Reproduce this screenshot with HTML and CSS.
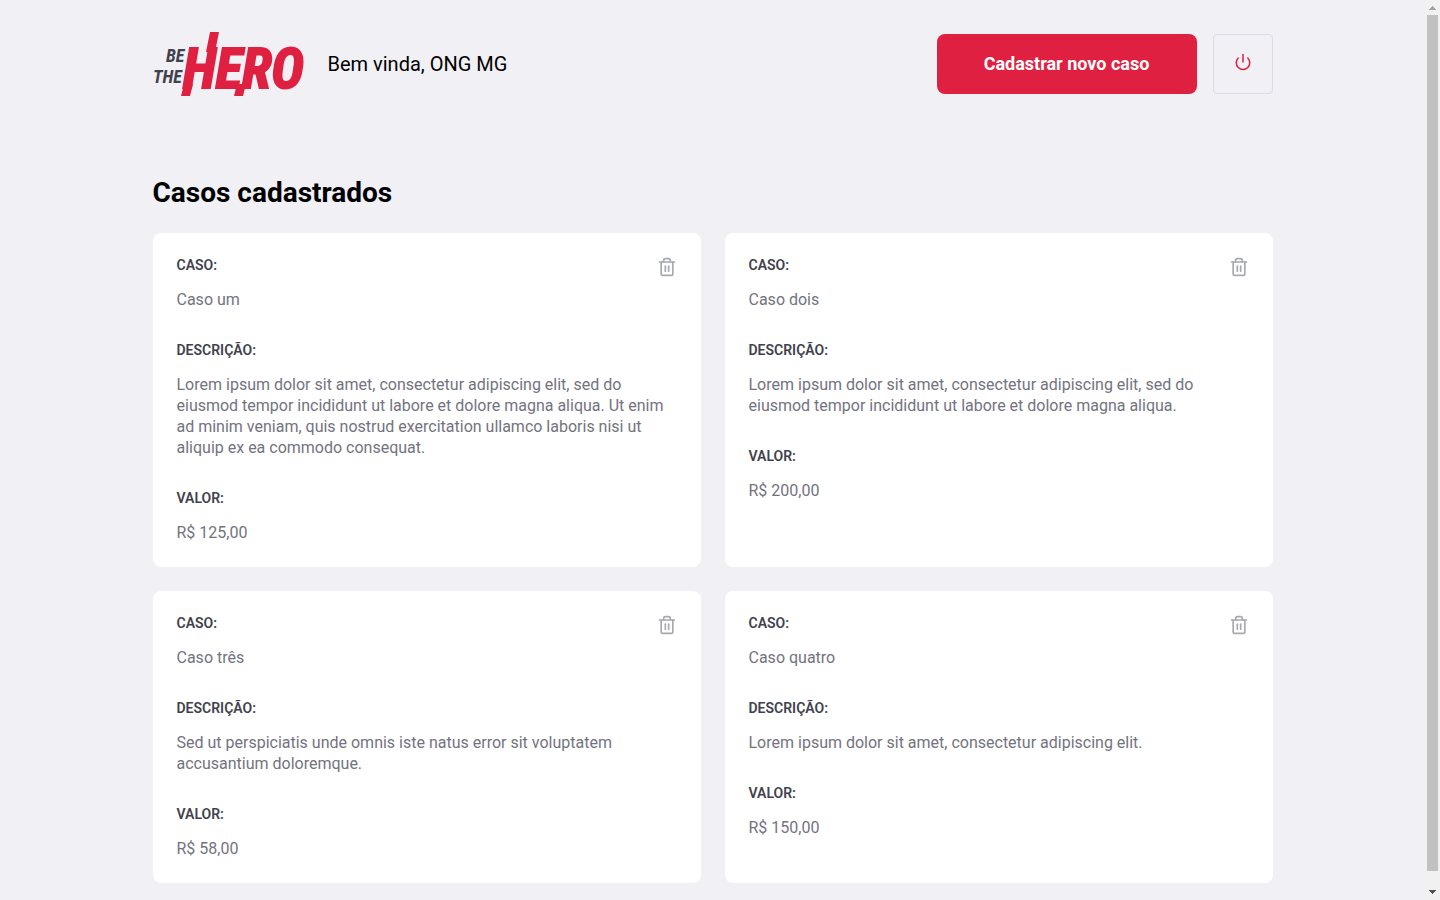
FILE: index.html
```html
<!DOCTYPE html>
<html lang="pt-BR">
<head>
<meta charset="utf-8">
<meta name="viewport" content="width=device-width, initial-scale=1">
<title>Be The Hero</title>
<link rel="stylesheet" href="styles.css">
</head>
<body>
<svg class="sprite" aria-hidden="true">
  <symbol id="trash" viewBox="0 0 24 24">
    <polyline points="3 6 5 6 21 6"/>
    <path d="M19 6v14a2 2 0 0 1-2 2H7a2 2 0 0 1-2-2V6m3 0V4a2 2 0 0 1 2-2h4a2 2 0 0 1 2 2v2"/>
    <line x1="10" y1="11" x2="10" y2="17"/>
    <line x1="14" y1="11" x2="14" y2="17"/>
  </symbol>
</svg>
<div class="profile">
  <header class="header">
    <svg class="logo" viewBox="0 0 150 64" role="img" aria-label="Be The Hero">
      <text class="logo-small" x="13" y="30">BE</text>
      <text class="logo-small" x="0" y="51">THE</text>
      <text class="logo-big" x="30" y="56">HERO</text>
      <path class="logo-bar" d="M31 52h9l-3 12h-9zM57 0h9l-4 20h-9zM84 52h9l-3 12h-9z"/>
    </svg>
    <span class="welcome">Bem vinda, ONG MG</span>
    <a class="button" href="#novo">Cadastrar novo caso</a>
    <button class="logout" type="button" aria-label="Sair">
      <svg class="power" viewBox="0 0 24 24"><path d="M18.36 6.64a9 9 0 1 1-12.73 0"/><line x1="12" y1="2" x2="12" y2="12"/></svg>
    </button>
  </header>
  <h1 class="title">Casos cadastrados</h1>
  <ul class="cases">
    <li class="case">
      <strong class="label">CASO:</strong>
      <p class="value">Caso um</p>
      <strong class="label">DESCRIÇÃO:</strong>
      <p class="value">Lorem ipsum dolor sit amet, consectetur adipiscing elit, sed do eiusmod tempor incididunt ut labore et dolore magna aliqua. Ut enim ad minim veniam, quis nostrud exercitation ullamco laboris nisi ut aliquip ex ea commodo consequat.</p>
      <strong class="label">VALOR:</strong>
      <p class="value">R$ 125,00</p>
      <button class="delete" type="button" aria-label="Excluir Caso um"><svg class="trash"><use href="#trash"/></svg></button>
    </li>
    <li class="case">
      <strong class="label">CASO:</strong>
      <p class="value">Caso dois</p>
      <strong class="label">DESCRIÇÃO:</strong>
      <p class="value">Lorem ipsum dolor sit amet, consectetur adipiscing elit, sed do eiusmod tempor incididunt ut labore et dolore magna aliqua.</p>
      <strong class="label">VALOR:</strong>
      <p class="value">R$ 200,00</p>
      <button class="delete" type="button" aria-label="Excluir Caso dois"><svg class="trash"><use href="#trash"/></svg></button>
    </li>
    <li class="case">
      <strong class="label">CASO:</strong>
      <p class="value">Caso três</p>
      <strong class="label">DESCRIÇÃO:</strong>
      <p class="value">Sed ut perspiciatis unde omnis iste natus error sit voluptatem accusantium doloremque.</p>
      <strong class="label">VALOR:</strong>
      <p class="value">R$ 58,00</p>
      <button class="delete" type="button" aria-label="Excluir Caso três"><svg class="trash"><use href="#trash"/></svg></button>
    </li>
    <li class="case">
      <strong class="label">CASO:</strong>
      <p class="value">Caso quatro</p>
      <strong class="label">DESCRIÇÃO:</strong>
      <p class="value">Lorem ipsum dolor sit amet, consectetur adipiscing elit.</p>
      <strong class="label">VALOR:</strong>
      <p class="value">R$ 150,00</p>
      <button class="delete" type="button" aria-label="Excluir Caso quatro"><svg class="trash"><use href="#trash"/></svg></button>
    </li>
  </ul>
</div>
<div class="scrollbar" aria-hidden="true">
  <svg class="arrow" viewBox="0 0 15 15"><path fill="#a3a3a3" d="M7 6h1v1h1v1h1v1h1v1H4V9h1V8h1V7h1z"/></svg>
  <div class="thumb"></div>
  <svg class="arrow" viewBox="0 0 15 15"><path fill="#505050" d="M4 5h7v1h-1v1H9v1H8v1H7V8H6V7H5V6H4z"/></svg>
</div>
</body>
</html>
```
FILE: styles.css
```css
* { margin: 0; padding: 0; box-sizing: border-box; }
html { scrollbar-width: none; }
body { padding-right: 15px; background: #f0f0f5; font: 400 16px/21px Roboto, sans-serif; -webkit-font-smoothing: antialiased; }
button { border: 0; background: transparent; cursor: pointer; }
.sprite { position: absolute; width: 0; height: 0; }
.profile { max-width: 1180px; padding: 32px 30px; margin: 0 auto; }
.header { display: flex; align-items: center; }
.logo { width: 150px; height: 64px; overflow: visible; }
.logo-small { font: italic 700 18px "Liberation Sans Narrow", "Roboto Condensed", "Liberation Sans", sans-serif; fill: #41414d; }
.logo-big { font: italic 700 55px "Liberation Sans Narrow", "Roboto Condensed", "Liberation Sans", sans-serif; fill: #e02041; stroke: #e02041; stroke-width: 2; }
.logo-bar { fill: #e02041; }
.welcome { font-size: 20px; line-height: 24px; margin-left: 25px; }
.button { width: 260px; height: 60px; margin-left: auto; border-radius: 8px; background: #e02041; color: #fff; font-size: 18px; font-weight: 700; line-height: 60px; text-align: center; text-decoration: none; }
.logout { display: flex; align-items: center; justify-content: center; width: 60px; height: 60px; margin-left: 16px; padding-bottom: 4px; border: 1px solid #dcdce6; border-radius: 4px; }
.power { width: 18px; height: 18px; fill: none; stroke: #e02041; stroke-width: 2; stroke-linecap: round; stroke-linejoin: round; }
.title { margin: 80px 0 24px; font-size: 28px; line-height: 33px; }
.cases { display: grid; grid-template-columns: repeat(2, 1fr); gap: 24px; list-style: none; }
.case { position: relative; padding: 24px; border-radius: 8px; background: #fff; }
.label { display: block; color: #41414d; font-size: 14px; font-weight: 600; line-height: 16px; }
.value { margin-top: 16px; color: #737380; }
.value + .label { margin-top: 32px; }
.delete { position: absolute; top: 24px; right: 24px; display: flex; }
.trash { width: 20px; height: 20px; fill: none; stroke: #a8a8b3; stroke-width: 2; stroke-linecap: round; stroke-linejoin: round; }
.scrollbar { position: fixed; top: 0; right: 0; bottom: 0; display: flex; flex-direction: column; width: 15px; background: #f1f1f1; }
.arrow { width: 15px; height: 15px; }
.thumb { flex: 1; margin: 0 2px 14px; background: #c1c1c1; }
```
